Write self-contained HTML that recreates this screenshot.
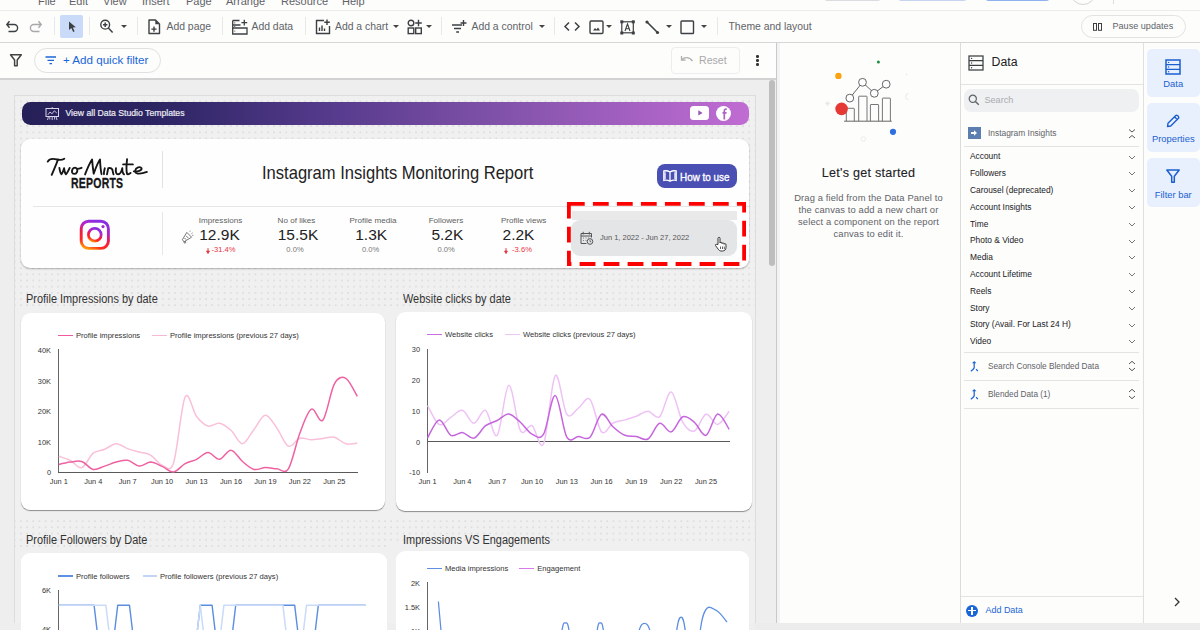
<!DOCTYPE html>
<html><head><meta charset="utf-8">
<style>
*{box-sizing:border-box;margin:0;padding:0}
html,body{width:1200px;height:630px;overflow:hidden;background:#fdfdfc;font-family:"Liberation Sans",sans-serif;color:#3c4043}
.a{position:absolute}
.t{position:absolute;white-space:nowrap;line-height:1}
svg{position:absolute;overflow:visible}
.sep{position:absolute;width:1px;background:#e8e8e8}
.dd{position:absolute;width:0;height:0;border-left:3px solid transparent;border-right:3px solid transparent;border-top:3px solid #444}
</style></head><body>
<!-- ===== menu row (cut) ===== -->
<div class="t" style="left:38px;top:-4.2px;font-size:11px;color:#5f6368">File</div>
<div class="t" style="left:69px;top:-4.2px;font-size:11px;color:#5f6368">Edit</div>
<div class="t" style="left:103px;top:-4.2px;font-size:11px;color:#5f6368">View</div>
<div class="t" style="left:142px;top:-4.2px;font-size:11px;color:#5f6368">Insert</div>
<div class="t" style="left:186px;top:-4.2px;font-size:11px;color:#5f6368">Page</div>
<div class="t" style="left:226px;top:-4.2px;font-size:11px;color:#5f6368">Arrange</div>
<div class="t" style="left:281px;top:-4.2px;font-size:11px;color:#5f6368">Resource</div>
<div class="t" style="left:342px;top:-4.2px;font-size:11px;color:#5f6368">Help</div>
<div class="a" style="left:823px;top:-10px;width:59px;height:11px;border:1px solid #dadce0;border-radius:4px"></div>
<div class="a" style="left:897px;top:-10px;width:71px;height:11px;border:1px solid #c6d4f0;border-radius:4px"></div>
<div class="a" style="left:985px;top:-10px;width:65px;height:11px;background:#d2e1fb;border-bottom:1px solid #8fb1f0;border-radius:4px"></div>
<div class="a" style="left:1070px;top:-21px;width:26px;height:26px;border:1px solid #d5d5d5;border-radius:50%"></div>
<div class="a" style="left:1113px;top:0;width:1px;height:4px;background:#ddd"></div>
<div class="a" style="left:0;top:10px;width:1200px;height:1px;background:#ececec"></div>

<!-- ===== toolbar ===== -->
<svg width="14" height="14" style="left:5px;top:20px" viewBox="0 0 14 14"><path d="M4.5,1.2 L1.8,4.5 L4.5,7.8 M2,4.5 H9.2 A3.4,3.5 0 0 1 9.2,11.5 H3.5" fill="none" stroke="#3c4043" stroke-width="1.4"/></svg>
<svg width="14" height="14" style="left:29px;top:20px" viewBox="0 0 14 14"><path d="M9.5,1.2 L12.2,4.5 L9.5,7.8 M12,4.5 H4.8 A3.4,3.5 0 0 0 4.8,11.5 H10.5" fill="none" stroke="#a9a9a9" stroke-width="1.4"/></svg>
<div class="sep" style="left:54px;top:17px;height:18px"></div>
<div class="a" style="left:60px;top:15px;width:23px;height:23px;background:#c9dbf8;border-radius:2px"></div>
<svg width="10" height="12" style="left:68px;top:21px" viewBox="0 0 10 12"><path d="M1,0.5 L1,9 L3.3,7 L5.2,11 L6.6,10.3 L4.8,6.5 L7.8,6.3 Z" fill="#3c4043"/></svg>
<div class="sep" style="left:89px;top:17px;height:18px"></div>
<svg width="16" height="16" style="left:98px;top:18px" viewBox="0 0 16 16"><circle cx="7.2" cy="6.7" r="4.4" fill="none" stroke="#3c4043" stroke-width="1.4"/><path d="M7.2,4.5 V8.9 M5,6.7 H9.4 M10.4,10 L14.6,14.5" stroke="#3c4043" stroke-width="1.5" fill="none"/></svg>
<div class="dd" style="left:121px;top:25px"></div>
<div class="sep" style="left:137px;top:17px;height:18px"></div>
<svg width="14" height="16" style="left:147px;top:18.5px" viewBox="0 0 14 16"><path d="M2,1 H8.5 L12.5,5 V14.5 H2 Z" fill="none" stroke="#3c4043" stroke-width="1.4" stroke-linejoin="round"/><path d="M8.3,1 V5.3 H12.5" fill="#3c4043"/><path d="M7,7.5 V12.7 M4.4,10.1 H9.6" stroke="#3c4043" stroke-width="1.4"/></svg>
<div class="t" style="left:166.5px;top:22px;font-size:10.4px;color:#5f6368">Add page</div>
<div class="sep" style="left:222px;top:17px;height:18px"></div>
<svg width="18" height="16" style="left:230.5px;top:18.5px" viewBox="0 0 18 16"><path d="M1.7,1.5 V15 H16 V9 H1.7 M1.7,1.5 H8.5 M1.7,6 H9.5" fill="none" stroke="#3c4043" stroke-width="1.3"/><path d="M13.3,0.8 V6.6 M10.4,3.7 H16.2" stroke="#3c4043" stroke-width="1.3"/><circle cx="3.8" cy="3.8" r="0.6" fill="#3c4043"/><circle cx="3.8" cy="7.5" r="0.6" fill="#3c4043"/><circle cx="3.8" cy="12" r="0.6" fill="#3c4043"/></svg>
<div class="t" style="left:251.5px;top:22px;font-size:10.4px;color:#5f6368">Add data</div>
<div class="sep" style="left:305px;top:17px;height:18px"></div>
<svg width="16" height="16" style="left:315px;top:18.5px" viewBox="0 0 16 16"><path d="M9,1.5 H1.5 V14.5 H14.5 V7" fill="none" stroke="#3c4043" stroke-width="1.4"/><path d="M12,0.5 V6 M9.3,3.2 H14.8 M4.5,12 V8.5 M7,12 V6.5 M9.5,12 V9.5" stroke="#3c4043" stroke-width="1.4"/></svg>
<div class="t" style="left:335px;top:22px;font-size:10.4px;color:#5f6368">Add a chart</div>
<div class="dd" style="left:393px;top:25px"></div>
<svg width="16" height="16" style="left:407px;top:18.5px" viewBox="0 0 16 16"><circle cx="4" cy="4" r="2.8" fill="none" stroke="#3c4043" stroke-width="1.4"/><path d="M11.5,0.7 V7.3 M8.2,4 H14.8" stroke="#3c4043" stroke-width="1.4"/><rect x="1.2" y="9" width="5.6" height="5.6" fill="none" stroke="#3c4043" stroke-width="1.4"/><rect x="8.7" y="9" width="5.6" height="5.6" fill="none" stroke="#3c4043" stroke-width="1.4"/></svg>
<div class="dd" style="left:426px;top:25px"></div>
<div class="sep" style="left:441px;top:17px;height:18px"></div>
<svg width="16" height="16" style="left:451px;top:18.5px" viewBox="0 0 16 16"><path d="M1,6 H11 M3,9.5 H10 M5.2,13 H8" stroke="#3c4043" stroke-width="1.4"/><path d="M12.5,1 V7 M9.5,4 H15.5" stroke="#3c4043" stroke-width="1.4"/></svg>
<div class="t" style="left:471.5px;top:22px;font-size:10.4px;color:#5f6368">Add a control</div>
<div class="dd" style="left:538.5px;top:25px"></div>
<div class="sep" style="left:554px;top:17px;height:18px"></div>
<svg width="16" height="12" style="left:564px;top:21px" viewBox="0 0 16 12"><path d="M5,1.5 L1,5.5 L5,9.5 M11,1.5 L15,5.5 L11,9.5" fill="none" stroke="#3c4043" stroke-width="1.5"/></svg>
<svg width="15" height="15" style="left:588.5px;top:19.5px" viewBox="0 0 15 15"><rect x="1" y="1" width="13" height="12.5" rx="1.2" fill="none" stroke="#3c4043" stroke-width="1.4"/><path d="M4,10.5 L6,8 L7.5,9.5 L9,7.5 L11,10.5 Z" fill="#3c4043"/></svg>
<div class="dd" style="left:606px;top:25px"></div>
<svg width="16" height="15" style="left:619.5px;top:19.5px" viewBox="0 0 16 15"><rect x="1.8" y="1.8" width="11.5" height="11" fill="none" stroke="#3c4043" stroke-width="1.2"/><rect x="0.3" y="0.3" width="3" height="3" fill="#3c4043"/><rect x="11.8" y="0.3" width="3" height="3" fill="#3c4043"/><rect x="0.3" y="11.5" width="3" height="3" fill="#3c4043"/><rect x="11.8" y="11.5" width="3" height="3" fill="#3c4043"/><path d="M5,11 L7.5,4 L10,11 M5.9,8.7 H9.1" fill="none" stroke="#3c4043" stroke-width="1.1"/></svg>
<svg width="15" height="15" style="left:644.5px;top:19.5px" viewBox="0 0 15 15"><path d="M2,2 L12.5,12.5" stroke="#3c4043" stroke-width="1.6"/><circle cx="2" cy="2" r="1.6" fill="#3c4043"/><circle cx="12.5" cy="12.5" r="1.6" fill="#3c4043"/></svg>
<div class="dd" style="left:666px;top:25px"></div>
<svg width="15" height="15" style="left:679.5px;top:19.5px" viewBox="0 0 15 15"><rect x="1" y="1" width="12.5" height="12.5" rx="0.8" fill="none" stroke="#3c4043" stroke-width="1.4"/></svg>
<div class="dd" style="left:701px;top:25px"></div>
<div class="sep" style="left:716.5px;top:17px;height:18px"></div>
<div class="t" style="left:728.5px;top:22px;font-size:10.4px;color:#5f6368">Theme and layout</div>
<div class="a" style="left:1081px;top:14.5px;width:104.5px;height:23.5px;border:1px solid #e3e3e3;border-radius:12px"></div>
<svg width="10" height="8" style="left:1092.5px;top:22.5px" viewBox="0 0 10 8"><rect x="0.5" y="0.5" width="3" height="6.8" fill="none" stroke="#3c4043" stroke-width="1"/><rect x="5.5" y="0.5" width="3" height="6.8" fill="none" stroke="#3c4043" stroke-width="1"/></svg>
<div class="t" style="left:1112.5px;top:22px;font-size:9.1px;color:#5f6368">Pause updates</div>
<div class="a" style="left:0;top:42px;width:1200px;height:1px;background:#d6d6d6"></div>

<!-- ===== filter bar ===== -->
<svg width="14" height="14" style="left:9px;top:53px" viewBox="0 0 14 14"><path d="M1.5,1.8 H12.3 L8.2,7 V12.8 H5.6 V7 Z" fill="none" stroke="#444" stroke-width="1.5" stroke-linejoin="round"/></svg>
<div class="a" style="left:34px;top:48px;width:127px;height:24.5px;border:1px solid #e0e0e0;border-radius:12.5px"></div>
<svg width="12" height="9" style="left:44.5px;top:56px" viewBox="0 0 12 9"><path d="M0.5,1 H11 M2.5,4.3 H9 M4.5,7.6 H7" stroke="#1a66d8" stroke-width="1.3"/></svg>
<div class="t" style="left:63px;top:54px;font-size:11.6px;color:#1a66d8">+ Add quick filter</div>
<div class="a" style="left:670.5px;top:46.5px;width:69px;height:27px;border:1px solid #ededed;border-radius:4px"></div>
<svg width="14" height="10" style="left:679.5px;top:55px" viewBox="0 0 14 10"><path d="M1.5,1 V5 H5.5" fill="none" stroke="#b0b0b0" stroke-width="1.3"/><path d="M1.8,4.8 C4,2 9,1.5 12.5,6" fill="none" stroke="#b0b0b0" stroke-width="1.3"/></svg>
<div class="t" style="left:699px;top:55px;font-size:10.6px;color:#a8a8a8">Reset</div>
<div class="a" style="left:756px;top:55px;width:2.6px;height:2.6px;background:#333;border-radius:50%"></div>
<div class="a" style="left:756px;top:59.2px;width:2.6px;height:2.6px;background:#333;border-radius:50%"></div>
<div class="a" style="left:756px;top:63.4px;width:2.6px;height:2.6px;background:#333;border-radius:50%"></div>
<div class="a" style="left:0;top:78px;width:777px;height:1.5px;background:#d2d2d2"></div>


<!-- ===== canvas ===== -->
<div class="a" style="left:0;top:79.5px;width:776px;height:551px;background:#eeeeee"></div>
<div class="a" style="left:14px;top:95px;width:742px;height:528px;background-color:#f0f0f0;background-image:radial-gradient(circle at 1px 1px,#dcdcdc 0.6px,transparent 1.1px);background-size:6.1719px 6.1719px;background-position:5px 4.6px;border:1px solid #dddddd;border-bottom:0"></div>
<div class="a" style="left:768.5px;top:80px;width:6px;height:186px;background:#bdbdbd;border-radius:3px"></div>
<div class="a" style="left:776px;top:43px;width:1px;height:580px;background:#c8c8c8"></div><div class="a" style="left:777px;top:43px;width:2.5px;height:580px;background:#f1f3f5"></div>

<!-- banner -->
<div class="a" style="left:22px;top:102px;width:727px;height:23px;border-radius:8.5px;background:linear-gradient(90deg,#262058 0%,#2b2462 18%,#553a8c 42%,#8554ac 68%,#a862c4 86%,#c06cd3 100%)"></div>
<svg width="15" height="14" style="left:44.5px;top:106.5px" viewBox="0 0 15 14"><rect x="1" y="1.5" width="12.5" height="8" fill="none" stroke="#d8d4ea" stroke-width="1"/><path d="M2.8,7.8 L5,5 L7,6.8 L9.3,3.8 L11.8,6" fill="none" stroke="#d8d4ea" stroke-width="0.9"/><path d="M7.2,0 V1.5 M3.5,9.5 L2.5,13 M7.2,9.5 V13 M11,9.5 L12,13 M4.8,9.5 V12.5 M9.6,9.5 V12.5" stroke="#d8d4ea" stroke-width="0.9"/></svg>
<div class="t" style="left:65.5px;top:108.5px;font-size:8.67px;color:#ecebf3;-webkit-text-stroke:0.2px #ecebf3">View all Data Studio Templates</div>
<div class="a" style="left:689.5px;top:106px;width:19.5px;height:14px;background:#fff;border-radius:3.5px"></div>
<svg width="6" height="6" style="left:697.5px;top:110.3px" viewBox="0 0 6 6"><path d="M0.3,0.3 L4.6,2.9 L0.3,5.5 Z" fill="#9457b3"/></svg>
<div class="a" style="left:716.3px;top:105.5px;width:15.2px;height:15.2px;background:#fff;border-radius:50%"></div>
<svg width="8" height="12" style="left:720.5px;top:107.5px" viewBox="0 0 8 12"><path d="M5.8,1.2 C4.2,0.8 3.3,1.6 3.3,3.2 V11.5 M1.5,4.8 H5.6" fill="none" stroke="#ab63c6" stroke-width="1.7"/></svg>

<!-- header card -->
<div class="a" style="left:21px;top:139px;width:728px;height:129px;background:#fefefe;border-radius:9px;box-shadow:0 1px 2px rgba(0,0,0,0.28)"></div>
<svg width="140" height="60" style="left:30px;top:145px" viewBox="0 0 1200 514"><g fill="none" stroke="#151515" stroke-width="16" stroke-linecap="round" stroke-linejoin="round">
<path d="M152,142 C165,118 200,116 232,124 C258,130 278,128 294,118"/>
<path d="M240,126 C222,170 204,215 186,256"/>
<path d="M252,196 C256,222 262,244 270,250 C281,240 286,216 292,199 C296,225 301,245 308,250 C320,240 331,216 340,196"/>
<path d="M386,194 C366,194 356,216 361,235 C366,252 391,252 401,235 C411,218 406,196 386,194 M400,204 C413,205 427,201 442,195"/>
<path d="M472,252 C492,200 512,152 532,124 C536,170 541,215 546,246 C562,200 581,150 600,124 C602,170 606,216 613,250"/>
<path d="M641,199 C636,220 632,240 634,250"/>
<path d="M660,252 C665,226 668,211 671,198 C682,196 697,195 706,210 C709,225 711,240 716,251"/>
<path d="M737,198 C732,226 737,251 756,251 C776,251 786,221 791,198 C791,226 796,246 806,251"/>
<path d="M832,121 C827,166 822,216 832,249 C842,256 852,246 862,239 M798,166 H882"/>
<path d="M890,226 C921,229 961,219 956,199 C946,181 906,191 901,221 C896,246 936,256 1002,231"/>
</g></svg>
<div class="t" style="left:71.3px;top:176px;font-size:14.6px;font-weight:bold;color:#151515;transform:scaleX(0.72);-webkit-text-stroke:0.3px #151515;transform-origin:0 0;letter-spacing:0.3px">REPORTS</div>
<div class="a" style="left:162px;top:151px;width:1px;height:37px;background:#e2e2e2"></div>
<div class="t" style="left:262px;top:163.5px;font-size:18.4px;color:#222;transform:scaleX(0.9);transform-origin:0 0">Instagram Insights Monitoring Report</div>
<div class="a" style="left:657px;top:164px;width:80px;height:24px;background:#4a4fb3;border-radius:8px"></div>
<svg width="14" height="12" style="left:662.5px;top:170px" viewBox="0 0 14 12"><path d="M7,2 C5,0.8 2.5,0.6 0.8,1 V10.5 C2.5,10 5,10.2 7,11.3 C9,10.2 11.5,10 13.2,10.5 V1 C11.5,0.6 9,0.8 7,2 Z M7,2 V11.3" fill="none" stroke="#fff" stroke-width="1.3"/><path d="M2,2.2 V9.2 M12,2.2 V9.2" stroke="#fff" stroke-width="1.3"/></svg>
<div class="t" style="left:679.5px;top:172px;font-size:11.5px;color:#fff;transform:scaleX(0.86);transform-origin:0 0;-webkit-text-stroke:0.35px #fff">How to use</div>
<div class="a" style="left:33px;top:206px;width:716px;height:1px;background:#e6e6e6"></div>
<div class="a" style="left:162px;top:212px;width:1px;height:43px;background:#e6e6e6"></div>
<svg width="32" height="32" style="left:79px;top:219px" viewBox="0 0 32 32"><defs><linearGradient id="ig" x1="0.15" y1="1" x2="0.55" y2="0"><stop offset="0" stop-color="#ffa00a"/><stop offset="0.22" stop-color="#ff2a1f"/><stop offset="0.5" stop-color="#f01a45"/><stop offset="0.75" stop-color="#b523c8"/><stop offset="1" stop-color="#8a2ee0"/></linearGradient></defs><rect x="2.2" y="2.2" width="27.2" height="27.2" rx="7.5" fill="none" stroke="url(#ig)" stroke-width="2.9"/><circle cx="15.8" cy="15.8" r="6.4" fill="none" stroke="url(#ig)" stroke-width="2.7"/><circle cx="24" cy="7.6" r="1.6" fill="#9b2fd0"/></svg>
<svg width="14" height="14" style="left:180px;top:230px" viewBox="0 0 14 14"><path d="M2.3,9.8 L4.2,11.7 L11.6,7.2 L6.8,2.4 Z M4.4,7.9 L6.1,9.6 M6.2,5.9 L8.4,8.1 M3.6,11.1 L4.6,13.2 L5.8,12.6 L5.2,11" fill="none" stroke="#666" stroke-width="0.9" stroke-linejoin="round"/><path d="M9.6,1.9 L10.4,0.6 M11.3,3.6 L12.8,2.8 M12,5.4 L13.6,5.3" stroke="#888" stroke-width="0.8"/></svg>
<div class="t" style="left:170.5px;width:100px;text-align:center;top:216.8px;font-size:8.1px;color:#5f5f5f">Impressions</div>
<div class="t" style="left:169.5px;width:100px;text-align:center;top:227.3px;font-size:15.5px;color:#222">12.9K</div>
<div class="t" style="left:173.5px;width:100px;text-align:center;top:245.5px;font-size:7.6px;color:#e8343f">-31.4%</div>
<svg width="4" height="6" style="left:205.5px;top:247.5px" viewBox="0 0 4 6"><path d="M2,0 V4 M0.6,3 L2,5.6 L3.4,3 Z" stroke="#e8343f" stroke-width="0.9" fill="#e8343f"/></svg>
<div class="t" style="left:246.5px;width:100px;text-align:center;top:216.8px;font-size:8.1px;color:#5f5f5f">No of likes</div>
<div class="t" style="left:248px;width:100px;text-align:center;top:227.3px;font-size:15.5px;color:#222">15.5K</div>
<div class="t" style="left:245px;width:100px;text-align:center;top:245.5px;font-size:7.6px;color:#777">0.0%</div>
<div class="t" style="left:323px;width:100px;text-align:center;top:216.8px;font-size:8.1px;color:#5f5f5f">Profile media</div>
<div class="t" style="left:321.2px;width:100px;text-align:center;top:227.3px;font-size:15.5px;color:#222">1.3K</div>
<div class="t" style="left:320.6px;width:100px;text-align:center;top:245.5px;font-size:7.6px;color:#777">0.0%</div>
<div class="t" style="left:396px;width:100px;text-align:center;top:216.8px;font-size:8.1px;color:#5f5f5f">Followers</div>
<div class="t" style="left:397.4px;width:100px;text-align:center;top:227.3px;font-size:15.5px;color:#222">5.2K</div>
<div class="t" style="left:396.2px;width:100px;text-align:center;top:245.5px;font-size:7.6px;color:#777">0.0%</div>
<div class="t" style="left:473.6px;width:100px;text-align:center;top:216.8px;font-size:8.1px;color:#5f5f5f">Profile views</div>
<div class="t" style="left:468.5px;width:100px;text-align:center;top:227.3px;font-size:15.5px;color:#222">2.2K</div>
<div class="t" style="left:472px;width:100px;text-align:center;top:245.5px;font-size:7.6px;color:#e8343f">-3.6%</div>
<svg width="4" height="6" style="left:504px;top:247.5px" viewBox="0 0 4 6"><path d="M2,0 V4 M0.6,3 L2,5.6 L3.4,3 Z" stroke="#e8343f" stroke-width="0.9" fill="#e8343f"/></svg>


<!-- date control -->
<div class="a" style="left:571.5px;top:211px;width:165.5px;height:9px;background:#e9e9e9"></div>
<div class="a" style="left:571px;top:220px;width:166px;height:36px;background:#e4e5e7;border-radius:9px"></div>
<svg width="14" height="14" style="left:579.5px;top:231px" viewBox="0 0 14 14"><path d="M1,2.5 H11.5 V6.5 M1,2.5 V12.5 H6.5 M1,5 H11.5" fill="none" stroke="#555" stroke-width="1"/><path d="M3.2,0.8 V3.5 M9.3,0.8 V3.5" stroke="#555" stroke-width="1"/><circle cx="10" cy="10.5" r="2.8" fill="none" stroke="#555" stroke-width="1"/><path d="M10,9 V10.7 H11.3" fill="none" stroke="#555" stroke-width="0.8"/><path d="M3,7 h1 M5.5,7 h1 M8,7 h1 M3,9.5 h1 M5.5,9.5 h1" stroke="#777" stroke-width="0.9"/></svg>
<div class="t" style="left:600px;top:234px;font-size:7.5px;color:#555">Jun 1, 2022 - Jun 27, 2022</div>
<svg width="14" height="16" style="left:714px;top:236px" viewBox="0 0 14 16"><path d="M4,8.5 V2.2 C4,1 6,1 6,2.2 V7 C6,6 8,6 8,7 V7.6 C8,6.7 10,6.7 10,7.6 V8.3 C10,7.5 12,7.5 12,8.5 V11.5 C12,13.5 10.5,15 8.5,15 H7 C5.8,15 5,14.3 4.2,13.2 L1.5,9.5 C1,8.8 2,7.8 2.8,8.4 Z" fill="#fff" stroke="#222" stroke-width="0.9"/><path d="M6.5,10.5 V13 M8.5,10.5 V13 M10.3,10.5 V13" stroke="#222" stroke-width="0.7"/></svg>
<svg width="800" height="300" style="left:0;top:0" viewBox="0 0 800 300"><rect x="568.9" y="203.9" width="175.2" height="60.1" fill="none" stroke="#fe0000" stroke-width="3.8" stroke-dasharray="15.8 8.2"/></svg>


<!-- ===== charts ===== -->
<div class="a" style="left:15px;top:306.5px;width:376px;height:210.5px;background:#f0f0f0"></div>
<div class="a" style="left:390px;top:305.5px;width:365px;height:211.5px;background:#f0f0f0"></div>
<div class="a" style="left:15px;top:546.5px;width:378px;height:76.5px;background:#f0f0f0"></div>
<div class="a" style="left:390px;top:545px;width:365px;height:78px;background:#f0f0f0"></div>

<div class="t" style="left:26px;top:292.5px;font-size:12px;color:#333;transform:scaleX(0.91);transform-origin:0 0">Profile Impressions by date</div>
<div class="t" style="left:403px;top:292.5px;font-size:12px;color:#333;transform:scaleX(0.91);transform-origin:0 0">Website clicks by date</div>
<div class="a" style="left:21px;top:312.5px;width:364px;height:197.5px;background:#fff;border-radius:9px;box-shadow:0 1px 1px rgba(0,0,0,0.42)"></div>
<div class="a" style="left:396px;top:311.5px;width:356px;height:199px;background:#fff;border-radius:9px;box-shadow:0 1px 1px rgba(0,0,0,0.42)"></div>
<div class="t" style="left:26px;top:533.5px;font-size:12px;color:#333;transform:scaleX(0.91);transform-origin:0 0">Profile Followers by Date</div>
<div class="t" style="left:403px;top:533.5px;font-size:12px;color:#333;transform:scaleX(0.91);transform-origin:0 0">Impressions VS Engagements</div>
<div class="a" style="left:21px;top:552.5px;width:366px;height:120px;background:#fff;border-radius:9px"></div>
<div class="a" style="left:396px;top:551px;width:353px;height:120px;background:#fff;border-radius:9px"></div>

<!-- chart 1 -->
<div class="a" style="left:58px;top:335px;width:14.5px;height:1.35px;background:#ee5a9b"></div>
<div class="t" style="left:76px;top:332.1px;font-size:7.6px;color:#333">Profile impressions</div>
<div class="a" style="left:152px;top:335px;width:14.5px;height:1.35px;background:#f6b9d4"></div>
<div class="t" style="left:170px;top:332.1px;font-size:7.6px;color:#333">Profile impressions (previous 27 days)</div>
<div class="t" style="left:0;width:51px;text-align:right;top:346.7px;font-size:7.4px;color:#333">40K</div>
<div class="t" style="left:0;width:51px;text-align:right;top:377.8px;font-size:7.4px;color:#333">30K</div>
<div class="t" style="left:0;width:51px;text-align:right;top:408.4px;font-size:7.4px;color:#333">20K</div>
<div class="t" style="left:0;width:51px;text-align:right;top:439.0px;font-size:7.4px;color:#333">10K</div>
<div class="t" style="left:0;width:51px;text-align:right;top:469.4px;font-size:7.4px;color:#333">0</div>
<div class="t" style="left:38.80px;width:40px;text-align:center;top:477.6px;font-size:7.4px;color:#333">Jun 1</div>
<div class="t" style="left:73.24px;width:40px;text-align:center;top:477.6px;font-size:7.4px;color:#333">Jun 4</div>
<div class="t" style="left:107.68px;width:40px;text-align:center;top:477.6px;font-size:7.4px;color:#333">Jun 7</div>
<div class="t" style="left:142.12px;width:40px;text-align:center;top:477.6px;font-size:7.4px;color:#333">Jun 10</div>
<div class="t" style="left:176.56px;width:40px;text-align:center;top:477.6px;font-size:7.4px;color:#333">Jun 13</div>
<div class="t" style="left:211.00px;width:40px;text-align:center;top:477.6px;font-size:7.4px;color:#333">Jun 16</div>
<div class="t" style="left:245.44px;width:40px;text-align:center;top:477.6px;font-size:7.4px;color:#333">Jun 19</div>
<div class="t" style="left:279.88px;width:40px;text-align:center;top:477.6px;font-size:7.4px;color:#333">Jun 22</div>
<div class="t" style="left:314.32px;width:40px;text-align:center;top:477.6px;font-size:7.4px;color:#333">Jun 25</div>

<div class="a" style="left:58px;top:349px;width:1px;height:124px;background:#666"></div>
<div class="a" style="left:58px;top:472px;width:300px;height:1px;background:#5a5a5a"></div>
<svg width="400" height="630" style="left:0;top:0" viewBox="0 0 400 630"><path d="M58.8,456.3 C60.7,457.0 66.5,458.4 70.3,460.3 C74.1,462.2 77.9,468.8 81.8,467.6 C85.6,466.4 89.4,456.3 93.2,453.2 C97.1,450.2 100.9,450.8 104.7,449.2 C108.5,447.7 112.4,443.8 116.2,443.7 C120.0,443.6 123.9,447.3 127.7,448.6 C131.5,450.0 135.3,450.9 139.2,452.0 C143.0,453.1 146.8,452.9 150.6,455.1 C154.5,457.3 158.3,463.9 162.1,465.2 C165.9,466.4 169.8,474.0 173.6,462.7 C177.4,451.4 181.3,404.9 185.1,397.2 C188.9,389.5 192.7,411.7 196.6,416.5 C200.4,421.3 204.2,424.9 208.0,426.0 C211.9,427.1 215.7,422.5 219.5,423.2 C223.3,424.0 227.2,426.9 231.0,430.3 C234.8,433.7 238.7,443.9 242.5,443.7 C246.3,443.6 250.1,434.1 254.0,429.4 C257.8,424.6 261.6,415.5 265.4,415.3 C269.3,415.1 273.1,423.0 276.9,428.1 C280.7,433.3 284.6,444.5 288.4,446.2 C292.2,447.9 296.1,439.3 299.9,438.2 C303.7,437.2 307.5,439.7 311.4,439.8 C315.2,439.8 319.0,438.9 322.8,438.5 C326.7,438.1 330.5,436.4 334.3,437.3 C338.1,438.2 342.0,442.8 345.8,443.7 C349.6,444.7 355.4,443.2 357.3,443.1" fill="none" stroke="#f9c0d9" stroke-width="1.5"/><path d="M58.8,464.6 C60.7,464.1 66.5,462.6 70.3,462.1 C74.1,461.6 77.9,460.3 81.8,461.5 C85.6,462.7 89.4,468.7 93.2,469.4 C97.1,470.2 100.9,467.3 104.7,466.1 C108.5,464.9 112.4,463.1 116.2,462.1 C120.0,461.1 123.9,459.6 127.7,460.3 C131.5,460.9 135.3,465.8 139.2,466.1 C143.0,466.4 146.8,462.1 150.6,462.1 C154.5,462.2 158.3,464.8 162.1,466.4 C165.9,468.0 169.8,472.4 173.6,471.9 C177.4,471.4 181.3,465.7 185.1,463.6 C188.9,461.5 192.7,461.2 196.6,459.3 C200.4,457.5 204.2,452.6 208.0,452.6 C211.9,452.6 215.7,459.8 219.5,459.3 C223.3,458.9 227.2,449.8 231.0,450.2 C234.8,450.5 238.7,458.3 242.5,461.5 C246.3,464.7 250.1,468.4 254.0,469.4 C257.8,470.5 261.6,467.7 265.4,467.6 C269.3,467.5 273.1,468.6 276.9,468.8 C280.7,469.0 284.6,474.8 288.4,468.8 C292.2,462.9 296.1,443.0 299.9,433.0 C303.7,423.1 307.5,411.3 311.4,409.2 C315.2,407.0 319.0,424.4 322.8,420.2 C326.7,416.0 330.5,391.1 334.3,384.1 C338.1,377.1 342.0,376.2 345.8,378.3 C349.6,380.3 355.4,393.3 357.3,396.3" fill="none" stroke="#ee62a2" stroke-width="1.5"/></svg>

<!-- chart 2 -->
<div class="a" style="left:427px;top:334px;width:14.5px;height:1.35px;background:#c86ee0"></div>
<div class="t" style="left:445px;top:331.1px;font-size:7.6px;color:#333">Website clicks</div>
<div class="a" style="left:505px;top:334px;width:14.5px;height:1.35px;background:#efc4f7"></div>
<div class="t" style="left:523px;top:331.1px;font-size:7.6px;color:#333">Website clicks (previous 27 days)</div>
<div class="t" style="left:370px;width:50px;text-align:right;top:345.6px;font-size:7.4px;color:#333">30</div>
<div class="t" style="left:370px;width:50px;text-align:right;top:376.8px;font-size:7.4px;color:#333">20</div>
<div class="t" style="left:370px;width:50px;text-align:right;top:407.7px;font-size:7.4px;color:#333">10</div>
<div class="t" style="left:370px;width:50px;text-align:right;top:438.8px;font-size:7.4px;color:#333">0</div>
<div class="t" style="left:370px;width:50px;text-align:right;top:469.4px;font-size:7.4px;color:#333">-10</div>
<div class="t" style="left:407.60px;width:40px;text-align:center;top:477.6px;font-size:7.4px;color:#333">Jun 1</div>
<div class="t" style="left:442.40px;width:40px;text-align:center;top:477.6px;font-size:7.4px;color:#333">Jun 4</div>
<div class="t" style="left:477.20px;width:40px;text-align:center;top:477.6px;font-size:7.4px;color:#333">Jun 7</div>
<div class="t" style="left:512.00px;width:40px;text-align:center;top:477.6px;font-size:7.4px;color:#333">Jun 10</div>
<div class="t" style="left:546.80px;width:40px;text-align:center;top:477.6px;font-size:7.4px;color:#333">Jun 13</div>
<div class="t" style="left:581.60px;width:40px;text-align:center;top:477.6px;font-size:7.4px;color:#333">Jun 16</div>
<div class="t" style="left:616.40px;width:40px;text-align:center;top:477.6px;font-size:7.4px;color:#333">Jun 19</div>
<div class="t" style="left:651.20px;width:40px;text-align:center;top:477.6px;font-size:7.4px;color:#333">Jun 22</div>
<div class="t" style="left:686.00px;width:40px;text-align:center;top:477.6px;font-size:7.4px;color:#333">Jun 25</div>

<div class="a" style="left:427px;top:348.5px;width:1px;height:124px;background:#666"></div>
<div class="a" style="left:427px;top:441.3px;width:303px;height:1px;background:#5a5a5a"></div>
<svg width="800" height="630" style="left:0;top:0" viewBox="0 0 800 630"><path d="M427.6,405.6 C429.5,408.8 435.3,422.5 439.2,424.5 C443.1,426.5 446.9,419.8 450.8,417.4 C454.7,415.0 458.5,409.3 462.4,410.3 C466.3,411.3 470.1,423.3 474.0,423.3 C477.9,423.3 481.7,408.3 485.6,410.3 C489.5,412.3 493.3,439.5 497.2,435.3 C501.1,431.1 504.9,386.0 508.8,385.3 C512.7,384.5 516.5,423.9 520.4,430.7 C524.3,437.4 528.1,423.6 532.0,425.7 C535.9,427.9 539.7,452.0 543.6,443.7 C547.5,435.3 551.3,380.6 555.2,375.7 C559.1,370.8 562.9,408.9 566.8,414.3 C570.7,419.7 574.5,410.6 578.4,408.1 C582.3,405.6 586.1,395.5 590.0,399.5 C593.9,403.4 597.7,428.0 601.6,431.9 C605.5,435.8 609.3,425.0 613.2,423.0 C617.1,420.9 620.9,421.0 624.8,419.9 C628.7,418.7 632.5,417.6 636.4,416.2 C640.3,414.7 644.1,411.1 648.0,411.2 C651.9,411.3 655.7,420.0 659.6,416.8 C663.5,413.6 667.3,391.1 671.2,392.1 C675.1,393.0 678.9,415.8 682.8,422.3 C686.7,428.8 690.5,432.3 694.4,431.0 C698.3,429.6 702.1,415.4 706.0,414.3 C709.9,413.2 713.7,425.0 717.6,424.5 C721.5,424.0 727.3,413.4 729.2,411.2" fill="none" stroke="#efc2f6" stroke-width="1.5"/><path d="M427.6,437.8 C429.5,434.8 435.3,420.3 439.2,419.9 C443.1,419.4 446.9,433.2 450.8,435.3 C454.7,437.4 458.5,432.1 462.4,432.5 C466.3,433.0 470.1,439.2 474.0,438.1 C477.9,437.0 481.7,428.7 485.6,425.7 C489.5,422.8 493.3,422.4 497.2,420.5 C501.1,418.5 504.9,413.7 508.8,414.0 C512.7,414.3 516.5,419.0 520.4,422.3 C524.3,425.7 528.1,432.1 532.0,434.1 C535.9,436.0 539.7,440.5 543.6,434.1 C547.5,427.6 551.3,394.9 555.2,395.5 C559.1,396.0 562.9,430.3 566.8,437.2 C570.7,444.0 574.5,436.5 578.4,436.5 C582.3,436.5 586.1,440.9 590.0,437.2 C593.9,433.5 597.7,416.0 601.6,414.3 C605.5,412.6 609.3,423.5 613.2,427.0 C617.1,430.5 620.9,433.7 624.8,435.3 C628.7,436.9 632.5,435.9 636.4,436.5 C640.3,437.2 644.1,441.2 648.0,439.0 C651.9,436.8 655.7,424.4 659.6,423.3 C663.5,422.1 667.3,433.0 671.2,431.9 C675.1,430.8 678.9,418.4 682.8,416.8 C686.7,415.2 690.5,419.2 694.4,422.3 C698.3,425.4 702.1,436.7 706.0,435.3 C709.9,433.9 713.7,415.0 717.6,414.0 C721.5,413.0 727.3,426.9 729.2,429.4" fill="none" stroke="#c566dd" stroke-width="1.5"/></svg>

<!-- chart 3 -->
<div class="a" style="left:58.3px;top:575.3px;width:14.5px;height:1.35px;background:#5f8fe0"></div>
<div class="t" style="left:76px;top:572.6px;font-size:7.6px;color:#333">Profile followers</div>
<div class="a" style="left:142.7px;top:575.3px;width:14.5px;height:1.35px;background:#c3d6f7"></div>
<div class="t" style="left:160px;top:572.6px;font-size:7.6px;color:#333">Profile followers (previous 27 days)</div>
<div class="t" style="left:0;width:51px;text-align:right;top:587.0px;font-size:7.4px;color:#333">6K</div>
<div class="t" style="left:0;width:51px;text-align:right;top:625.5px;font-size:7.4px;color:#333">4K</div>
<div class="a" style="left:58.2px;top:590px;width:1px;height:40px;background:#666"></div>
<svg width="400" height="630" style="left:0;top:0" viewBox="0 0 400 630"><path d="M58.7,605.3 L70.5,605.3 L82.3,605.3 L94.1,605.3 L105.9,705.0 L117.7,605.3 L129.5,605.3 L141.3,705.0 L153.1,705.0 L164.9,705.0 L176.7,705.0 L188.5,705.0 L200.3,605.3 L212.1,605.3 L223.9,705.0 L235.7,605.3 L247.5,605.3 L259.3,605.3 L271.1,605.3 L282.9,605.3 L294.7,605.3 L306.5,705.0 L318.3,605.3 L330.1,605.3 L341.9,605.3 L353.7,605.3 L365.5,605.3" fill="none" stroke="#5b8de0" stroke-width="1.4" stroke-linejoin="round"/><path d="M58.7,605.3 L70.5,605.3 L82.3,605.3 L94.1,605.3 L105.9,605.3 L117.7,705.0 L129.5,705.0 L141.3,705.0 L153.1,705.0 L164.9,705.0 L176.7,705.0 L188.5,705.0 L200.3,605.3 L212.1,705.0 L223.9,605.3 L235.7,605.3 L247.5,605.3 L259.3,605.3 L271.1,605.3 L282.9,605.3 L294.7,705.0 L306.5,605.3 L318.3,605.3 L330.1,605.3 L341.9,605.3 L353.7,605.3 L365.5,605.3" fill="none" stroke="#c9dbf8" stroke-width="1.5" stroke-linejoin="round"/></svg>

<!-- chart 4 -->
<div class="a" style="left:427.3px;top:567.5px;width:14.5px;height:1.35px;background:#5f8fe0"></div>
<div class="t" style="left:445px;top:564.6px;font-size:7.6px;color:#333">Media impressions</div>
<div class="a" style="left:519.3px;top:567.5px;width:14.5px;height:1.35px;background:#d77be8"></div>
<div class="t" style="left:537.3px;top:564.6px;font-size:7.6px;color:#333">Engagement</div>
<div class="t" style="left:370px;width:50px;text-align:right;top:579.5px;font-size:7.4px;color:#333">2K</div>
<div class="t" style="left:370px;width:50px;text-align:right;top:604.0px;font-size:7.4px;color:#333">1.5K</div>
<div class="t" style="left:370px;width:50px;text-align:right;top:627.5px;font-size:7.4px;color:#333">1K</div>
<div class="a" style="left:427px;top:582px;width:1px;height:48px;background:#666"></div>
<svg width="800" height="630" style="left:0;top:0" viewBox="0 0 800 630"><path d="M438.4,601.5 C439.2,610 440,620 441.2,633 M561.6,633 C563.3,621 564.2,623 565.5,623 C566.8,623 567.7,621 569.4,633 M596.8,633 C598.5,621 599.2,623 600.3,623 C601.4,623 602.1,621 603.8,633 M638.3,633 C640.8,624 642.5,623.3 644.5,623.3 C646.5,623.3 648.2,624 650.7,633 M676.3,633 C678.5,617 679.9,617 681.1,617 C682.3,617 683.5,617 685.6,633 M700,633 C701.5,620 703.5,609 709,607.2 C712,607.5 714,609.2 716.5,610.5 C720,612.5 724,618 727,622.2" fill="none" stroke="#5b8de0" stroke-width="1.25"/></svg>
<div class="a" style="left:755px;top:622.5px;width:445px;height:8px;background:#ececec"></div>

<!--CANVAS-->

<!-- ===== middle panel ===== -->
<svg width="100" height="80" style="left:820px;top:55px" viewBox="820 55 100 80">
<circle cx="878.4" cy="62" r="1.5" fill="#1e8e3e"/>
<circle cx="838.4" cy="75.9" r="3.2" fill="#f9a30f"/>
<circle cx="893" cy="131.8" r="3.1" fill="#2f6fe0"/>
<path d="M844.1,121.2 H891.7" stroke="#666" stroke-width="1"/>
<path d="M846.3,121.2 V108.8 Q846.3,108.3 846.8,108.3 H853.8 Q854.3,108.3 854.3,108.8 V121.2 M858.7,121.2 V96.7 Q858.7,96.2 859.2,96.2 H866.5 Q867,96.2 867,96.7 V121.2 M870.4,121.2 V105 Q870.4,104.5 870.9,104.5 H878.1 Q878.6,104.5 878.6,105 V121.2 M882.4,121.2 V98.6 Q882.4,98.1 882.9,98.1 H889.9 Q890.4,98.1 890.4,98.6 V121.2" fill="none" stroke="#666" stroke-width="0.9"/>
<path d="M849.8,98.1 L862.5,82.3 L874.3,93.3 L886.2,84.2" fill="none" stroke="#555" stroke-width="0.9"/>
<circle cx="849.8" cy="98.1" r="3.9" fill="#fff" stroke="#555" stroke-width="0.9"/>
<circle cx="862.5" cy="82.3" r="3.9" fill="#fff" stroke="#555" stroke-width="0.9"/>
<circle cx="874.3" cy="93.3" r="3.9" fill="#fff" stroke="#555" stroke-width="0.9"/>
<circle cx="886.2" cy="84.2" r="3.9" fill="#fff" stroke="#555" stroke-width="0.9"/>
<circle cx="841.6" cy="108.9" r="6.3" fill="#e53935"/>
<path d="M825,103.5 h5 M827.5,101 v5 M825.8,101.8 l3.4,3.4 M829.2,101.8 l-3.4,3.4" stroke="#e0e0e0" stroke-width="0.6"/>
<path d="M908.5,93.5 A3,3 0 0 0 908.5,99.5" fill="none" stroke="#e3e3e3" stroke-width="0.8"/>
<circle cx="906.6" cy="74.4" r="0.6" fill="#ddd"/>
</svg><svg width="10" height="10" style="left:858px;top:134px" viewBox="0 0 10 10"><circle cx="5.3" cy="5" r="2.3" fill="none" stroke="#ededed" stroke-width="1"/>
</svg>
<div class="t" style="left:777px;width:183px;text-align:center;top:167.2px;font-size:12.6px;color:#202124;letter-spacing:0.25px;-webkit-text-stroke:0.1px #202124">Let's get started</div>
<div class="t" style="left:777px;width:183px;text-align:center;top:191.5px;font-size:9.4px;color:#5f6368;line-height:12.2px;letter-spacing:0.12px;white-space:normal">Drag a field from the Data Panel to<br>the canvas to add a new chart or<br>select a component on the report<br>canvas to edit it.</div>
<div class="a" style="left:959.5px;top:43px;width:1px;height:580px;background:#dcdcdc"></div>

<!-- ===== data panel ===== -->
<svg width="16" height="16" style="left:968px;top:54.5px" viewBox="0 0 16 16"><rect x="1" y="1" width="14" height="14" fill="none" stroke="#3c4043" stroke-width="1.25"/><path d="M1,5.7 H15 M1,10.3 H15" stroke="#3c4043" stroke-width="1.3"/><circle cx="3.6" cy="3.4" r="0.7" fill="#3c4043"/><circle cx="3.6" cy="8" r="0.7" fill="#3c4043"/><circle cx="3.6" cy="12.7" r="0.7" fill="#3c4043"/></svg>
<div class="t" style="left:991.5px;top:56.3px;font-size:12.3px;color:#202124">Data</div>
<div class="a" style="left:961px;top:83.5px;width:182px;height:1px;background:#e3e3e3"></div>
<div class="a" style="left:963.5px;top:89px;width:175px;height:22.5px;background:#eef0f2;border-radius:7px"></div>
<svg width="12" height="12" style="left:968px;top:94px" viewBox="0 0 12 12"><circle cx="4.8" cy="4.8" r="3.6" fill="none" stroke="#5f6368" stroke-width="1.2"/><path d="M7.4,7.4 L10.8,10.8" stroke="#5f6368" stroke-width="1.4"/></svg>
<div class="t" style="left:984.5px;top:95.8px;font-size:9.1px;color:#a9abae">Search</div>
<div class="a" style="left:968px;top:126.5px;width:12.5px;height:12.3px;background:#5c7fb1"></div>
<svg width="8" height="8" style="left:970.3px;top:128.6px" viewBox="0 0 8 8"><path d="M1,3 H4 V1.3 L7,4 L4,6.7 V5 H1 Z" fill="#fff"/></svg>
<div class="t" style="left:988px;top:129px;font-size:8.4px;color:#5f6368">Instagram Insights</div>
<svg width="8" height="12" style="left:1127.5px;top:127.5px" viewBox="0 0 8 12"><path d="M1,1.5 L4,4 L7,1.5 M1,10 L4,7.5 L7,10" fill="none" stroke="#555" stroke-width="1"/></svg>
<div class="a" style="left:963.5px;top:146px;width:175px;height:1px;background:#e3e3e3"></div>
<div class="t" style="left:970px;top:152.4px;font-size:8.4px;color:#202124">Account</div>
<svg width="8" height="5" style="left:1127.5px;top:154.5px" viewBox="0 0 8 5"><path d="M1,1 L4,4 L7,1" fill="none" stroke="#666" stroke-width="0.9"/></svg>
<div class="t" style="left:970px;top:169.2px;font-size:8.4px;color:#202124">Followers</div>
<svg width="8" height="5" style="left:1127.5px;top:171.3px" viewBox="0 0 8 5"><path d="M1,1 L4,4 L7,1" fill="none" stroke="#666" stroke-width="0.9"/></svg>
<div class="t" style="left:970px;top:186.0px;font-size:8.4px;color:#202124">Carousel (deprecated)</div>
<svg width="8" height="5" style="left:1127.5px;top:188.1px" viewBox="0 0 8 5"><path d="M1,1 L4,4 L7,1" fill="none" stroke="#666" stroke-width="0.9"/></svg>
<div class="t" style="left:970px;top:202.8px;font-size:8.4px;color:#202124">Account Insights</div>
<svg width="8" height="5" style="left:1127.5px;top:204.9px" viewBox="0 0 8 5"><path d="M1,1 L4,4 L7,1" fill="none" stroke="#666" stroke-width="0.9"/></svg>
<div class="t" style="left:970px;top:219.6px;font-size:8.4px;color:#202124">Time</div>
<svg width="8" height="5" style="left:1127.5px;top:221.7px" viewBox="0 0 8 5"><path d="M1,1 L4,4 L7,1" fill="none" stroke="#666" stroke-width="0.9"/></svg>
<div class="t" style="left:970px;top:236.4px;font-size:8.4px;color:#202124">Photo &amp; Video</div>
<svg width="8" height="5" style="left:1127.5px;top:238.5px" viewBox="0 0 8 5"><path d="M1,1 L4,4 L7,1" fill="none" stroke="#666" stroke-width="0.9"/></svg>
<div class="t" style="left:970px;top:253.2px;font-size:8.4px;color:#202124">Media</div>
<svg width="8" height="5" style="left:1127.5px;top:255.3px" viewBox="0 0 8 5"><path d="M1,1 L4,4 L7,1" fill="none" stroke="#666" stroke-width="0.9"/></svg>
<div class="t" style="left:970px;top:270.0px;font-size:8.4px;color:#202124">Account Lifetime</div>
<svg width="8" height="5" style="left:1127.5px;top:272.1px" viewBox="0 0 8 5"><path d="M1,1 L4,4 L7,1" fill="none" stroke="#666" stroke-width="0.9"/></svg>
<div class="t" style="left:970px;top:286.8px;font-size:8.4px;color:#202124">Reels</div>
<svg width="8" height="5" style="left:1127.5px;top:288.9px" viewBox="0 0 8 5"><path d="M1,1 L4,4 L7,1" fill="none" stroke="#666" stroke-width="0.9"/></svg>
<div class="t" style="left:970px;top:303.6px;font-size:8.4px;color:#202124">Story</div>
<svg width="8" height="5" style="left:1127.5px;top:305.7px" viewBox="0 0 8 5"><path d="M1,1 L4,4 L7,1" fill="none" stroke="#666" stroke-width="0.9"/></svg>
<div class="t" style="left:970px;top:320.4px;font-size:8.4px;color:#202124">Story (Avail. For Last 24 H)</div>
<svg width="8" height="5" style="left:1127.5px;top:322.5px" viewBox="0 0 8 5"><path d="M1,1 L4,4 L7,1" fill="none" stroke="#666" stroke-width="0.9"/></svg>
<div class="t" style="left:970px;top:337.2px;font-size:8.4px;color:#202124">Video</div>
<svg width="8" height="5" style="left:1127.5px;top:339.3px" viewBox="0 0 8 5"><path d="M1,1 L4,4 L7,1" fill="none" stroke="#666" stroke-width="0.9"/></svg>

<div class="a" style="left:963.5px;top:352px;width:175px;height:1px;background:#e3e3e3"></div>
<svg width="12" height="12" style="left:968px;top:359.5px" viewBox="0 0 12 12"><path d="M4,3.3 L6.2,1.1 L8.4,3.3 Z" fill="#1a66d8"/><path d="M6.2,3 V7.6 Q6.2,9 2.8,11.2 M8.1,9.1 L9.8,11.2" fill="none" stroke="#1a66d8" stroke-width="1.25"/></svg>
<div class="t" style="left:988px;top:362.5px;font-size:8.25px;color:#5f6368">Search Console Blended Data</div>
<svg width="8" height="12" style="left:1127.5px;top:360px" viewBox="0 0 8 12"><path d="M1,4 L4,1.3 L7,4 M1,8 L4,10.7 L7,8" fill="none" stroke="#555" stroke-width="1"/></svg>
<div class="a" style="left:963.5px;top:380px;width:175px;height:1px;background:#e3e3e3"></div>
<svg width="12" height="12" style="left:968px;top:387.5px" viewBox="0 0 12 12"><path d="M4,3.3 L6.2,1.1 L8.4,3.3 Z" fill="#1a66d8"/><path d="M6.2,3 V7.6 Q6.2,9 2.8,11.2 M8.1,9.1 L9.8,11.2" fill="none" stroke="#1a66d8" stroke-width="1.25"/></svg>
<div class="t" style="left:988px;top:390.5px;font-size:8.25px;color:#5f6368">Blended Data (1)</div>
<svg width="8" height="12" style="left:1127.5px;top:388px" viewBox="0 0 8 12"><path d="M1,4 L4,1.3 L7,4 M1,8 L4,10.7 L7,8" fill="none" stroke="#555" stroke-width="1"/></svg>
<div class="a" style="left:963.5px;top:408px;width:175px;height:1px;background:#e3e3e3"></div>
<div class="a" style="left:961px;top:596px;width:182px;height:1px;background:#e3e3e3"></div>
<div class="a" style="left:966px;top:604.5px;width:12px;height:12px;background:#1a66d8;border-radius:50%"></div>
<div class="a" style="left:971.3px;top:606.5px;width:1.4px;height:8px;background:#fff"></div>
<div class="a" style="left:968px;top:609.8px;width:8px;height:1.4px;background:#fff"></div>
<div class="t" style="left:985.5px;top:606px;font-size:8.95px;color:#1a66d8">Add Data</div>
<div class="a" style="left:1143px;top:43px;width:1px;height:580px;background:#e0e0e0"></div>

<!-- ===== right rail ===== -->
<div class="a" style="left:1147px;top:48.5px;width:52.5px;height:48px;background:#e8f0fe;border-radius:5px"></div>
<div class="a" style="left:1147px;top:103px;width:52.5px;height:48.7px;background:#e8f0fe;border-radius:5px"></div>
<div class="a" style="left:1147px;top:158px;width:52.5px;height:48.7px;background:#e8f0fe;border-radius:5px"></div>
<svg width="16" height="16" style="left:1165px;top:58.5px" viewBox="0 0 16 16"><rect x="1" y="1" width="14" height="14" fill="none" stroke="#1a5fd0" stroke-width="1.5"/><path d="M1,5.7 H15 M1,10.3 H15" stroke="#1a5fd0" stroke-width="1.3"/><circle cx="3.6" cy="3.4" r="0.7" fill="#1a5fd0"/><circle cx="3.6" cy="8" r="0.7" fill="#1a5fd0"/><circle cx="3.6" cy="12.7" r="0.7" fill="#1a5fd0"/></svg>
<div class="t" style="left:1147px;width:52.5px;text-align:center;top:79px;font-size:9.4px;color:#1a5fd0">Data</div>
<svg width="16" height="16" style="left:1165px;top:112.5px" viewBox="0 0 16 16"><path d="M2.5,13.5 L3,10.3 L10.8,2.5 Q11.6,1.8 12.4,2.5 L13.5,3.6 Q14.2,4.4 13.5,5.2 L5.7,13 Z M9.5,3.8 L12.2,6.5" fill="none" stroke="#1a5fd0" stroke-width="1.4" stroke-linejoin="round"/></svg>
<div class="t" style="left:1147px;width:52.5px;text-align:center;top:134px;font-size:9.4px;color:#1a5fd0">Properties</div>
<svg width="16" height="16" style="left:1165px;top:167.5px" viewBox="0 0 16 16"><path d="M1.8,2 H14.2 L9.3,8.2 V14.3 H6.7 V8.2 Z" fill="none" stroke="#1a5fd0" stroke-width="1.5" stroke-linejoin="round"/></svg>
<div class="t" style="left:1147px;width:52.5px;text-align:center;top:189.5px;font-size:9.4px;color:#1a5fd0">Filter bar</div>
<svg width="8" height="10" style="left:1172.5px;top:596.5px" viewBox="0 0 8 10"><path d="M2,1 L6,5 L2,9" fill="none" stroke="#333" stroke-width="1.3"/></svg>

<!--PANELS-->
</body></html>
